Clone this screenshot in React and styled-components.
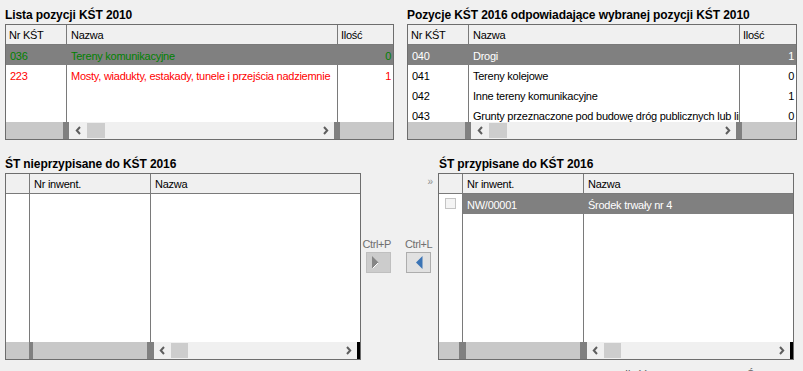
import React from 'react';
import styled, { createGlobalStyle } from 'styled-components';

const GlobalStyle = createGlobalStyle`
  * { box-sizing: border-box; }
  html, body {
    margin: 0;
    padding: 0;
    background: #f0f0f0;
    overflow: hidden;
  }
  body {
    font-family: "Liberation Sans", Arial, sans-serif;
    font-size: 11px;
    color: #000;
  }
`;

const Page = styled.div`
  display: flex;
  flex-direction: column;
  padding: 8px 0 0 5px;
  width: 803px;
  height: 371px;
`;

const TopRow = styled.div`
  display: flex;
  gap: 13px;
`;

const BottomRow = styled.div`
  display: flex;
  margin-top: 17px;
`;

const Panel = styled.div`
  display: flex;
  flex-direction: column;
  width: ${(p) => p.$w}px;
`;

const Title = styled.div`
  font-weight: bold;
  font-size: 12px;
  line-height: 14px;
  height: 14px;
  margin: 0 0 2px ${(p) => p.$indent || 0}px;
  white-space: nowrap;
  letter-spacing: -0.1px;
`;

const GridBox = styled.div`
  display: flex;
  flex-direction: column;
  width: ${(p) => p.$w}px;
  height: ${(p) => p.$h}px;
  border: 1px solid #6d6d6d;
  background: #fff;
`;

const HeaderRow = styled.div`
  display: flex;
  height: 20px;
  flex-shrink: 0;
  border-bottom: 1px solid #7a7a7a;
  background: #f0f0f0;
`;

const HeaderCell = styled.div`
  width: ${(p) => (p.$w ? `${p.$w}px` : 'auto')};
  flex: ${(p) => (p.$w ? '0 0 auto' : '1 1 0')};
  height: 19px;
  line-height: 19px;
  padding: 1px 0 0 ${(p) => p.$pad}px;
  border-right: ${(p) => (p.$last ? 'none' : '1px solid #7a7a7a')};
  white-space: nowrap;
  overflow: hidden;
  letter-spacing: -0.25px;
`;

const Body = styled.div`
  flex: 1;
  display: flex;
  flex-direction: column;
  overflow: hidden;
`;

const Row = styled.div`
  display: flex;
  height: 20px;
  flex-shrink: 0;
`;

const FillerRow = styled.div`
  display: flex;
  flex: 1;
`;

const Cell = styled.div`
  width: ${(p) => (p.$w ? `${p.$w}px` : 'auto')};
  flex: ${(p) => (p.$w ? '0 0 auto' : '1 1 0')};
  height: 100%;
  line-height: 20px;
  padding: 1px ${(p) => (p.$align === 'right' ? 2 : 0)}px 0 ${(p) => p.$pad}px;
  text-align: ${(p) => p.$align || 'left'};
  background: ${(p) => p.$bg};
  color: ${(p) => p.$color};
  border-right: ${(p) => (p.$last ? 'none' : `1px solid ${p.$line}`)};
  white-space: nowrap;
  overflow: hidden;
  letter-spacing: -0.25px;
`;

const Checkbox = styled.span`
  display: block;
  width: 11px;
  height: 11px;
  margin: 3px 0 0 6px;
  border: 1px solid #c4c4c4;
  background: #f4f4f4;
`;

const FooterBar = styled.div`
  display: flex;
  height: 17px;
  flex-shrink: 0;
`;

const Segment = styled.div`
  width: ${(p) => (p.$w ? `${p.$w}px` : 'auto')};
  flex: ${(p) => (p.$w ? '0 0 auto' : '1 1 0')};
  background: ${(p) =>
    ({ gray: '#c8c8c8', dark: '#808080', black: '#000', track: '#f0f0f0' }[p.$kind])};
`;

const Track = styled.div`
  width: ${(p) => p.$w}px;
  flex-shrink: 0;
  display: flex;
  align-items: center;
  background: #f0f0f0;
  padding: 0 5px 0 ${(p) => p.$lead}px;
`;

const Thumb = styled.div`
  width: ${(p) => p.$w}px;
  height: 15px;
  margin-left: 6px;
  background: #cdcdcd;
`;

const Spacer = styled.div`
  flex: 1;
`;

const Middle = styled.div`
  width: 77px;
  display: flex;
  flex-direction: column;
`;

const MoreMark = styled.div`
  height: 14px;
  margin-top: 18px;
  padding-right: 5px;
  text-align: right;
  font-size: 10px;
  line-height: 14px;
  color: #8e8e8e;
`;

const ButtonRow = styled.div`
  display: flex;
  margin-top: 49px;
  padding-left: 1px;
  gap: 14px;
`;

const ButtonGroup = styled.div`
  display: flex;
  flex-direction: column;
  width: ${(p) => p.$w}px;
  align-items: ${(p) => p.$align};
`;

const ShortcutLabel = styled.div`
  height: 13px;
  line-height: 13px;
  margin-bottom: 1px;
  color: #6f6f6f;
  letter-spacing: -0.4px;
  white-space: nowrap;
`;

const MoveButton = styled.div`
  width: 25px;
  height: 21px;
  display: flex;
  align-items: center;
  justify-content: center;
  padding: ${(p) => (p.$disabled ? '0 6px 0 0' : '0 0 0 1px')};
  background: ${(p) => (p.$disabled ? '#cccccc' : '#e1e1e1')};
  border: 1px solid ${(p) => (p.$disabled ? '#bfbfbf' : '#adadad')};
  margin-left: ${(p) => (p.$disabled ? 0 : 1)}px;
`;

const StatusRow = styled.div`
  display: flex;
  margin-top: 8px;
  padding-left: 620px;
  color: #5a5a5a;
  line-height: 13px;
`;

const StatusText = styled.span`
  width: ${(p) => p.$w}px;
  white-space: nowrap;
`;

const ChevronLeft = () => (
  <svg width="6" height="9" viewBox="0 0 6 9">
    <path d="M5 1 L1.8 4.5 L5 8" fill="none" stroke="#5e5e5e" strokeWidth="2" />
  </svg>
);

const ChevronRight = () => (
  <svg width="6" height="9" viewBox="0 0 6 9">
    <path d="M1 1 L4.2 4.5 L1 8" fill="none" stroke="#5e5e5e" strokeWidth="2" />
  </svg>
);

const Footer = ({ segments }) => (
  <FooterBar>
    {segments.map((s, i) =>
      s.kind === 'track' ? (
        <Track key={i} $w={s.w} $lead={s.lead}>
          <ChevronLeft />
          <Thumb $w={s.thumb} />
          <Spacer />
          <ChevronRight />
        </Track>
      ) : (
        <Segment key={i} $w={s.w} $kind={s.kind} />
      )
    )}
  </FooterBar>
);

const DataGrid = ({ width, height, columns, rows, footer, selectedFrom = 0 }) => (
  <GridBox $w={width} $h={height}>
    <HeaderRow>
      {columns.map((c, i) => (
        <HeaderCell key={i} $w={c.w} $pad={c.hpad} $last={i === columns.length - 1}>
          {c.title}
        </HeaderCell>
      ))}
    </HeaderRow>
    <Body>
      {rows.map((r, ri) => (
        <Row key={ri}>
          {columns.map((c, i) => {
            const sel = r.selected && i >= selectedFrom;
            return (
              <Cell
                key={i}
                $w={c.w}
                $pad={c.pad}
                $align={c.align}
                $last={i === columns.length - 1}
                $bg={sel ? '#808080' : '#fff'}
                $line={sel ? '#808080' : '#7a7a7a'}
                $color={r.color || (sel ? '#fff' : '#000')}
              >
                {r.cells[i] === 'check' ? <Checkbox /> : r.cells[i]}
              </Cell>
            );
          })}
        </Row>
      ))}
      <FillerRow>
        {columns.map((c, i) => (
          <Cell key={i} $w={c.w} $pad={0} $bg="#fff" $line="#7a7a7a" $last={i === columns.length - 1} />
        ))}
      </FillerRow>
    </Body>
    <Footer segments={footer} />
  </GridBox>
);

const kstColumns = [
  { title: 'Nr KŚT', w: 61, hpad: 3, pad: 4 },
  { title: 'Nazwa', w: 271, hpad: 4, pad: 4 },
  { title: 'Ilość', hpad: 3, pad: 0, align: 'right' },
];

const stColumns = [
  { title: '', w: 24, hpad: 0, pad: 0 },
  { title: 'Nr inwent.', w: 121, hpad: 4, pad: 4 },
  { title: 'Nazwa', hpad: 4, pad: 4 },
];

const rows2010 = [
  { cells: ['036', 'Tereny komunikacyjne', '0'], color: '#008000', selected: true },
  { cells: ['223', 'Mosty, wiadukty, estakady, tunele i przejścia nadziemnie', '1'], color: '#ff0000' },
];

const rows2016 = [
  { cells: ['040', 'Drogi', '1'], selected: true },
  { cells: ['041', 'Tereny kolejowe', '0'] },
  { cells: ['042', 'Inne tereny komunikacyjne', '1'] },
  { cells: ['043', 'Grunty przeznaczone pod budowę dróg publicznych lub linii kolejowych', '0'] },
];

const assignedRows = [{ cells: ['check', 'NW/00001', 'Środek trwały nr 4'], selected: true }];

const topFooter = [
  { kind: 'gray', w: 57 },
  { kind: 'dark', w: 6 },
  { kind: 'track', w: 265, lead: 6, thumb: 18 },
  { kind: 'dark', w: 6 },
  { kind: 'gray' },
];

const unassignedFooter = [
  { kind: 'gray', w: 23 },
  { kind: 'dark', w: 4 },
  { kind: 'gray', w: 114 },
  { kind: 'dark', w: 7 },
  { kind: 'track', w: 203, lead: 5, thumb: 17 },
  { kind: 'black' },
];

const assignedFooter = [
  { kind: 'gray', w: 20 },
  { kind: 'dark', w: 7 },
  { kind: 'gray', w: 114 },
  { kind: 'dark', w: 7 },
  { kind: 'track', w: 203, lead: 5, thumb: 17 },
  { kind: 'black' },
];

const App = () => (
  <>
    <GlobalStyle />
    <Page>
      <TopRow>
        <Panel $w={389}>
          <Title>Lista pozycji KŚT 2010</Title>
          <DataGrid width={389} height={116} columns={kstColumns} rows={rows2010} footer={topFooter} />
        </Panel>
        <Panel $w={390}>
          <Title>Pozycje KŚT 2016 odpowiadające wybranej pozycji KŚT 2010</Title>
          <DataGrid width={390} height={116} columns={kstColumns} rows={rows2016} footer={topFooter} />
        </Panel>
      </TopRow>
      <BottomRow>
        <Panel $w={356}>
          <Title>ŚT nieprzypisane do KŚT 2016</Title>
          <DataGrid width={356} height={187} columns={stColumns} rows={[]} footer={unassignedFooter} />
        </Panel>
        <Middle>
          <MoreMark>»</MoreMark>
          <ButtonRow>
            <ButtonGroup $w={29} $align="flex-end">
              <ShortcutLabel>Ctrl+P</ShortcutLabel>
              <MoveButton $disabled>
                <svg width="7" height="13" viewBox="0 0 7 13">
                  <polygon points="0,0 6.5,6.5 0,13" fill="#858585" />
                  <path d="M0.5 12.5 L6 7" stroke="#fff" strokeWidth="1" />
                </svg>
              </MoveButton>
            </ButtonGroup>
            <ButtonGroup $w={28} $align="flex-start">
              <ShortcutLabel>Ctrl+L</ShortcutLabel>
              <MoveButton>
                <svg width="7" height="13" viewBox="0 0 7 13">
                  <polygon points="6.5,0 0,6.5 6.5,13" fill="#3b74b5" />
                </svg>
              </MoveButton>
            </ButtonGroup>
          </ButtonRow>
        </Middle>
        <Panel $w={356}>
          <Title $indent={1}>ŚT przypisane do KŚT 2016</Title>
          <DataGrid
            width={356}
            height={187}
            columns={stColumns}
            rows={assignedRows}
            selectedFrom={1}
            footer={assignedFooter}
          />
        </Panel>
      </BottomRow>
      <StatusRow>
        <StatusText $w={122}>Ilość:</StatusText>
        <StatusText $w={20}>Śr</StatusText>
      </StatusRow>
    </Page>
  </>
);

export default App;
